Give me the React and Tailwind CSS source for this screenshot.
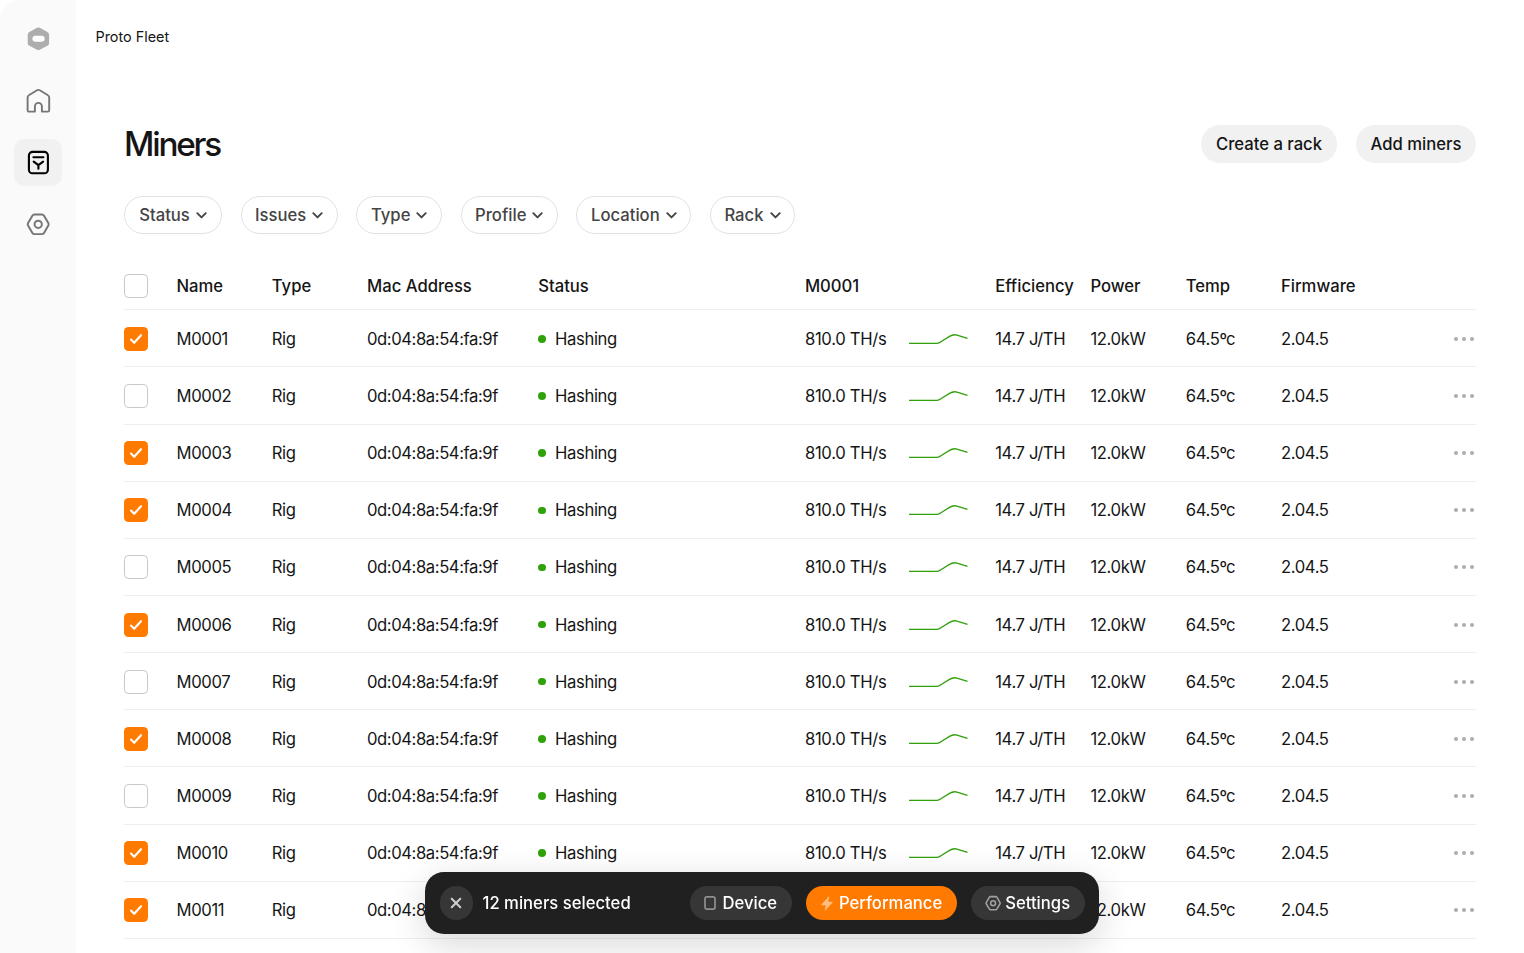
import React, { useState } from 'react';

const miners = [
  { name: 'M0001', selected: true },
  { name: 'M0002', selected: false },
  { name: 'M0003', selected: true },
  { name: 'M0004', selected: true },
  { name: 'M0005', selected: false },
  { name: 'M0006', selected: true },
  { name: 'M0007', selected: false },
  { name: 'M0008', selected: true },
  { name: 'M0009', selected: false },
  { name: 'M0010', selected: true },
  { name: 'M0011', selected: true },
];

const filters = [
  { label: 'Status', width: 'w-[98px]' },
  { label: 'Issues', width: 'w-[97px]' },
  { label: 'Type', width: 'w-[86px]' },
  { label: 'Profile', width: 'w-[97px]' },
  { label: 'Location', width: 'w-[115px]' },
  { label: 'Rack', width: 'w-[85px]' },
];

const GRID =
  'grid grid-cols-[52.5px_95.25px_95.25px_171.2px_266.7px_190.3px_95.25px_95.25px_95.25px_1fr] items-center border-b border-[#efefef] whitespace-nowrap';

const LogoIcon = () => (
  <svg className="w-6 h-6 overflow-visible" viewBox="-0.4 0.2 24 24">
    <path
      d="M10.600 1a2.900 2.900 0 0 1 2.800 0l7.600 4.100a3.200 3.200 0 0 1 1.700 2.800v8.200a3.200 3.200 0 0 1-1.700 2.800l-7.600 4.100a2.900 2.900 0 0 1-2.800 0L3 18.900a3.200 3.200 0 0 1-1.700-2.800V7.900A3.200 3.200 0 0 1 3 5.100z"
      fill="#adadad"
    />
    <rect x="6" y="9" width="12.200" height="6" rx="3" fill="#fff" />
  </svg>
);

const HomeIcon = () => (
  <svg className="w-6 h-6 overflow-visible" viewBox="-0.4 0.3 24 24" fill="none" stroke="#767676" strokeWidth="1.900">
    <path
      d="M1.200 8.900a3 3 0 0 1 1.600-2.600L10.600 1.600a2.800 2.800 0 0 1 2.800 0L21.200 6.300A3 3 0 0 1 22.800 8.900V21.600a1.300 1.300 0 0 1-1.300 1.300H15.500V17.700a3.500 3.500 0 0 0-7 0v5.200H2.500A1.300 1.300 0 0 1 1.200 21.600z"
      strokeLinejoin="round"
    />
  </svg>
);

const MinerIcon = () => (
  <svg className="w-6 h-6 overflow-visible" viewBox="-0.4 -0.6 24 24" fill="none" stroke="#000" strokeWidth="2.100" strokeLinecap="round" strokeLinejoin="round">
    <rect x="2.500" y="1.300" width="19" height="21.400" rx="3.600" />
    <path d="M7 6.700h10M7.300 11L12 14.500l4.700-3.500M12 14.500v3.700" />
  </svg>
);

const HexIcon = ({ className, color, strokeWidth = 2 }) => (
  <svg className={className} viewBox="-0.4 -0.3 24.400 24" fill="none" stroke={color} strokeWidth={strokeWidth}>
    <path
      d="M8.200 2h7.600a2.400 2.400 0 0 1 2.100 1.200l4.400 7.600a2.400 2.400 0 0 1 0 2.400l-4.400 7.600a2.400 2.400 0 0 1-2.100 1.200H8.200a2.400 2.400 0 0 1-2.100-1.200L1.700 13.200a2.400 2.400 0 0 1 0-2.400l4.400-7.600a2.400 2.400 0 0 1 2.100-1.200z"
      strokeLinejoin="round"
    />
    <circle cx="12" cy="12" r="3.700" />
  </svg>
);

const Sidebar = () => (
  <aside className="w-[76px] shrink-0 bg-[#fafafa] rounded-tl-[19px] flex flex-col items-center pt-[14.900px] gap-[14.400px]">
    <div className="size-[47.500px] flex items-center justify-center">
      <LogoIcon />
    </div>
    <button className="size-[47.500px] flex items-center justify-center">
      <HomeIcon />
    </button>
    <button className="size-[47.500px] flex items-center justify-center rounded-[10px] bg-[#f1f1f1]">
      <MinerIcon />
    </button>
    <button className="size-[47.500px] flex items-center justify-center">
      <HexIcon className="w-6 h-6 overflow-visible" color="#767676" />
    </button>
  </aside>
);

const Checkbox = ({ checked, onChange }) => (
  <button
    role="checkbox"
    aria-checked={checked}
    onClick={onChange}
    className={`size-6 rounded-[4.500px] flex items-center justify-center ${
      checked ? 'bg-[#ff7a00]' : 'bg-white border border-[#c8c8c8]'
    }`}
  >
    {checked && (
      <svg className="w-3.5 h-3.5" viewBox="0 0 14 14" fill="none" stroke="#fff" strokeWidth="2.100" strokeLinecap="round" strokeLinejoin="round">
        <path d="M2 7.600l3.200 3.200L12 3.200" />
      </svg>
    )}
  </button>
);

const Chevron = () => (
  <svg className="w-[11px] h-[7px]" viewBox="0 0 11 7" fill="none" stroke="#444" strokeWidth="1.900" strokeLinecap="round" strokeLinejoin="round">
    <path d="M1.300 1.200l4.200 4.200 4.200-4.200" />
  </svg>
);

const Sparkline = () => (
  <svg className="w-[59px] h-3" viewBox="0 0 59 12" fill="none" stroke="#30a10a" strokeWidth="1.300">
    <path d="M0 10.400h27.500c1.600 0 2.600-.6 4-1.400l9-5.600c3-1.900 4.600-2.200 7.500-1.300l10.500 3.300" />
  </svg>
);

const MinerRow = ({ miner, onToggle }) => (
  <div className={`${GRID} h-[57.150px] pt-px tracking-[-0.370px]`}>
    <Checkbox checked={miner.selected} onChange={onToggle} />
    <span>{miner.name}</span>
    <span>Rig</span>
    <span className="tracking-[-0.430px]">0d:04:8a:54:fa:9f</span>
    <div className="flex items-center gap-[9.300px]">
      <span className="size-[7.500px] rounded-full bg-[#30a10a]" />
      <span>Hashing</span>
    </div>
    <div className="flex items-center">
      <span className="w-[104px] tracking-[-0.300px]">810.0 TH/s</span>
      <Sparkline />
    </div>
    <span>14.7 J/TH</span>
    <span>12.0kW</span>
    <span>64.5ºc</span>
    <div className="flex items-center justify-between pr-[2.500px]">
      <span>2.04.5</span>
      <button className="flex gap-[3.700px]">
        <span className="size-1 rounded-full bg-[#adadad]" />
        <span className="size-1 rounded-full bg-[#adadad]" />
        <span className="size-1 rounded-full bg-[#adadad]" />
      </button>
    </div>
  </div>
);

const ActionBar = () => (
  <div className="fixed left-[425.400px] top-[872px] w-[674px] h-[62px] rounded-[19px] bg-[#202020] text-white font-medium flex items-center pl-[14.300px] pr-[14px] shadow-[0_10px_36px_rgba(0,0,0,0.16)]">
    <button className="size-[33.300px] rounded-full bg-[#363636] flex items-center justify-center mr-[9.500px]">
      <svg className="w-3 h-3" viewBox="0 0 12 12" stroke="#d0d0d0" strokeWidth="2" strokeLinecap="round">
        <path d="M1.700 1.700l8.600 8.600M10.300 1.700l-8.600 8.600" />
      </svg>
    </button>
    <span>12 miners selected</span>
    <div className="ml-auto flex gap-[14.300px]">
      <button className="w-[102px] h-[33.500px] rounded-full bg-[#363636] flex items-center justify-center gap-1.5">
        <svg className="w-3 h-[14px]" viewBox="0 0 12 14" fill="none" stroke="#8f8f8f" strokeWidth="1.700">
          <rect x="1" y=".85" width="10" height="12.300" rx="1.800" />
        </svg>
        Device
      </button>
      <button className="w-[151px] h-[33.500px] rounded-full bg-[#ff7a00] flex items-center justify-center gap-1.5">
        <svg className="w-3 h-[15px]" viewBox="0 0 12 15" fill="#ffbd80">
          <path d="M7.600.6L.4 8.400c-.3.400-.1.800.4.800h4l-1 4.700c-.1.600.3.800.700.4L11.600 6.500c.3-.4.100-.8-.4-.8h-4L8.300 1c.1-.6-.3-.8-.7-.4z" />
        </svg>
        Performance
      </button>
      <button className="w-[114px] h-[33.500px] rounded-full bg-[#363636] flex items-center justify-center gap-1 pr-[1.500px]">
        <HexIcon className="w-4 h-4" color="#a0a0a0" strokeWidth={2.4} />
        Settings
      </button>
    </div>
  </div>
);

const App = () => {
  const [rows, setRows] = useState(miners);

  const toggle = (name) => {
    setRows(rows.map((m) => (m.name === name ? { ...m, selected: !m.selected } : m)));
  };

  return (
    <div className="flex h-[953px] overflow-hidden bg-white font-['Inter',sans-serif] text-[16.670px] leading-6 text-[#151515]">
      <Sidebar />

      <main className="flex-1 min-w-0">
        <header className="h-[73px] pl-[19.500px] flex items-center text-[14.400px]">Proto Fleet</header>

        <div className="pl-12 pr-12">
          {/* Title */}
          <div className="mt-[51px] h-[39px] flex items-center justify-between">
            <h1 className="text-[33.300px] font-medium tracking-[-2.200px]">Miners</h1>
            <div className="flex gap-[19px] font-medium">
              <button className="w-[136px] h-[38px] rounded-full bg-[#f1f1f1]">Create a rack</button>
              <button className="w-[120px] h-[38px] rounded-full bg-[#f1f1f1]">Add miners</button>
            </div>
          </div>

          {/* Filters */}
          <div className="mt-[33px] flex gap-[18.600px] font-medium text-[#444]">
            {filters.map(({ label, width }) => (
              <button
                key={label}
                className={`${width} h-[38px] rounded-full border border-[#e2e2e2] flex items-center justify-center gap-1.5`}
              >
                {label}
                <Chevron />
              </button>
            ))}
          </div>

          {/* Table */}
          <div className="mt-[29px]">
            <div className={`${GRID} h-[47.300px] font-medium`}>
              <Checkbox checked={false} />
              <span>Name</span>
              <span>Type</span>
              <span>Mac Address</span>
              <span>Status</span>
              <span>M0001</span>
              <span>Efficiency</span>
              <span>Power</span>
              <span>Temp</span>
              <span>Firmware</span>
            </div>
            {rows.map((miner) => (
              <MinerRow key={miner.name} miner={miner} onToggle={() => toggle(miner.name)} />
            ))}
          </div>
        </div>
      </main>

      <ActionBar />
    </div>
  );
};

export default App;
